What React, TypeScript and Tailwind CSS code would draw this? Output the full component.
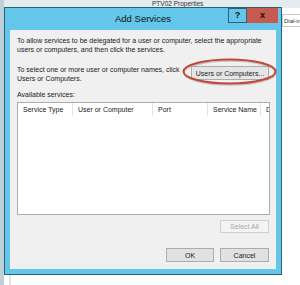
import React from "react";

const font = { fontFamily: '"Liberation Sans", Arial, sans-serif' };

function Btn({
  label,
  className = "",
  disabled = false,
}: {
  label: string;
  className?: string;
  disabled?: boolean;
}) {
  return (
    <div
      className={`flex items-center justify-center whitespace-nowrap border text-[7px] leading-none ${
        disabled
          ? "border-[#cfcfcf] bg-[#f4f4f4] text-[#a8a8a8]"
          : "border-[#acacac] bg-[#e1e1e1] text-[#1a1a1a]"
      } ${className}`}
    >
      {label}
    </div>
  );
}

function ServicesList() {
  const cols = [
    { name: "Service Type", w: "w-[55px]" },
    { name: "User or Computer", w: "w-[80px]" },
    { name: "Port", w: "w-[55px]" },
    { name: "Service Name", w: "w-[53px]" },
    { name: "D", w: "w-[20px]" },
  ];
  return (
    <div className="mt-[3px] h-[113px] overflow-hidden border border-[#acacac] bg-white">
      <div className="flex h-[13px] w-[300px]">
        {cols.map((c) => (
          <div
            key={c.name}
            className={`${c.w} flex shrink-0 items-center whitespace-nowrap border-r border-[#e3e3e3] pl-[5px] text-[7px] text-[#1a1a1a]`}
          >
            {c.name}
          </div>
        ))}
      </div>
    </div>
  );
}

export default function App() {
  return (
    <div
      className="relative h-[285px] w-[300px] overflow-hidden bg-white"
      style={font}
    >
      {/* desktop behind the dialog */}
      <div className="absolute inset-x-0 top-0 h-[8px] bg-[#e4ebee]">
        <span className="absolute left-[152px] top-0 text-[6.5px] leading-[7px] text-[#333]">
          PTV02 Properties
        </span>
      </div>
      <div className="absolute bottom-0 left-0 top-0 w-[4px] bg-[#bcd1da]" />
      <div className="absolute bottom-0 left-[9px] top-[270px] w-[2px] bg-[#e2e2e2]" />
      <div className="absolute left-[282px] top-[14px] h-[13px] w-[18px] overflow-hidden whitespace-nowrap border-y border-l border-[#c9c9c9] bg-white pl-[1px] text-[6px] leading-[12px] text-[#333]">
        Dial-in
      </div>

      {/* dialog window */}
      <div className="absolute left-[4px] top-[7px] flex h-[268px] w-[278px] flex-col border border-[#2f5f73] bg-[#64c6ea]">
        <div className="relative flex h-[22px] shrink-0 items-center justify-center">
          <span className="text-[9.5px] text-[#111]">Add Services</span>
          <div className="absolute right-[3px] top-0 flex">
            <div className="flex h-[15px] w-[19px] items-center justify-center border border-[#2f5f73] bg-[#64c6ea] text-[9px] font-bold text-[#111]">
              ?
            </div>
            <div className="flex h-[15px] w-[31px] items-center justify-center bg-[#c75a4f] text-[9px] font-bold text-[#111]">
              x
            </div>
          </div>
        </div>

        <div className="mx-[5px] mb-[5px] flex flex-1 flex-col bg-[#f0f0f0] pl-[7px] pr-[6px] pt-[6px] text-[7px] leading-[9px] text-[#1a1a1a]">
          <p>
            To allow services to be delegated for a user or computer, select
            the appropriate users or computers, and then click the services.
          </p>

          <div className="mt-[11px] flex items-start justify-between">
            <p className="w-[172px]">
              To select one or more user or computer names, click Users or
              Computers.
            </p>
            <Btn
              label="Users or Computers..."
              className="mr-[1px] mt-[1px] h-[14px] w-[78px] border-[#6f9fd0] bg-[#e5e5e5]"
            />
          </div>

          <p className="mt-[7px]">Available services:</p>
          <ServicesList />

          <div className="mt-[5px] flex justify-end pr-[1px]">
            <Btn label="Select All" disabled className="h-[13px] w-[49px]" />
          </div>
          <div className="mt-[15px] flex justify-end gap-[6px] pr-[1px]">
            <Btn label="OK" className="h-[14px] w-[48px]" />
            <Btn label="Cancel" className="h-[14px] w-[49px]" />
          </div>
        </div>
      </div>

      {/* red annotation ellipse */}
      <svg
        className="pointer-events-none absolute left-0 top-0"
        width="300"
        height="285"
        viewBox="0 0 300 285"
      >
        <ellipse
          cx="230"
          cy="73"
          rx="46"
          ry="12"
          fill="none"
          stroke="#9a9a9a"
          strokeWidth="1.5"
          opacity="0.5"
        />
        <ellipse
          cx="229.5"
          cy="71.5"
          rx="46"
          ry="12"
          fill="none"
          stroke="#c2473a"
          strokeWidth="2"
        />
      </svg>
    </div>
  );
}
